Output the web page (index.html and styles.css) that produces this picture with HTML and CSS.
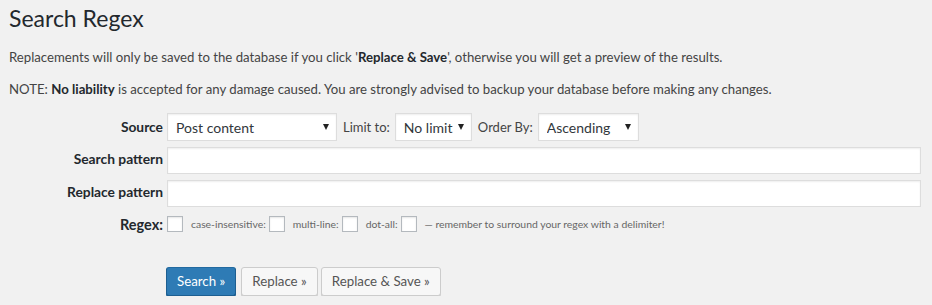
FILE: index.html
```html
<!DOCTYPE html>
<html>
<head>
<meta charset="utf-8">
<link rel="stylesheet" href="styles.css">
</head>
<body>
<div class="wrap">
  <h1 class="title">Search Regex</h1>
  <p class="note">Replacements will only be saved to the database if you click '<strong>Replace &amp; Save</strong>', otherwise you will get a preview of the results.</p>
  <p class="note">NOTE: <strong>No liability</strong> is accepted for any damage caused. You are strongly advised to backup your database before making any changes.</p>

  <form class="form-grid">
    <label class="lbl lbl-source">Source</label>
    <div class="field-row">
      <span class="sel sel-source"><select><option>Post content</option></select></span>
      <span class="inline-lbl">Limit to:</span>
      <span class="sel sel-limit"><select><option>No limit</option></select></span>
      <span class="inline-lbl">Order By:</span>
      <span class="sel sel-order"><select><option>Ascending</option></select></span>
    </div>

    <label class="lbl">Search pattern</label>
    <input class="text-in" type="text">

    <label class="lbl">Replace pattern</label>
    <input class="text-in" type="text">

    <label class="lbl lbl-regex">Regex:</label>
    <div class="regex-row">
      <input class="cb" type="checkbox">
      <span class="small">case-insensitive:</span><input class="cb" type="checkbox">
      <span class="small">multi-line:</span><input class="cb" type="checkbox">
      <span class="small">dot-all:</span><input class="cb" type="checkbox">
      <span class="small hint">— remember to surround your regex with a delimiter!</span>
    </div>
  </form>

  <div class="buttons">
    <button class="btn btn-primary" type="button">Search »</button>
    <button class="btn" type="button">Replace »</button>
    <button class="btn btn-last" type="button">Replace &amp; Save »</button>
  </div>
</div>
</body>
</html>
```

FILE: styles.css
```css
html, body {
  margin: 0;
  padding: 0;
  background: #f1f1f1;
}
body {
  font-family: Lato, "Open Sans", sans-serif;
  font-size: 13px;
  color: #444;
  line-height: 1.4;
}
.wrap {
  padding: 0 0 0 9px;
}
.title {
  font-size: 23px;
  font-weight: 400;
  color: #23282d;
  margin: 0;
  padding: 4px 0 0 0;
  line-height: 29px;
}
.note {
  margin: 15px 0 0 0;
  line-height: 19px;
  font-size: 13.2px;
}
.note + .note {
  margin-top: 13px;
}
.note strong {
  color: #23282d;
  font-weight: 700;
}
.form-grid {
  display: grid;
  grid-template-columns: 154px 754px;
  column-gap: 4px;
  margin-top: 14px;
  align-items: start;
}
.lbl {
  text-align: right;
  font-weight: 700;
  color: #23282d;
  font-size: 13.8px;
  line-height: 18px;
  padding-top: 3px;
}
.lbl-source { padding-top: 5px; }
.field-row {
  display: flex;
  align-items: center;
  height: 28px;
}
.inline-lbl {
  margin: 0 5px 0 6px;
  color: #444;
}
.sel {
  position: relative;
  display: inline-block;
}
.sel select {
  appearance: none;
  -webkit-appearance: none;
  height: 28px;
  border: 1px solid #ddd;
  box-shadow: inset 0 1px 2px rgba(0,0,0,.07);
  background: #fff;
  font-family: inherit;
  font-size: 14px;
  color: #32373c;
  padding: 0 8px;
  margin: 0;
  border-radius: 0;
  display: block;
}
.sel::after {
  content: "";
  position: absolute;
  right: 8px;
  top: 11px;
  border-left: 3px solid transparent;
  border-right: 3px solid transparent;
  border-top: 6px solid #222;
  pointer-events: none;
}
.sel-source select { width: 170px; }
.sel-limit select { width: 77px; }
.sel-order select { width: 101px; }

.text-in {
  box-sizing: border-box;
  width: 754px;
  height: 27px;
  border: 1px solid #ddd;
  box-shadow: inset 0 1px 2px rgba(0,0,0,.07);
  background: #fff;
  margin: 0;
  font-family: inherit;
  font-size: 14px;
}
.form-grid > .text-in, .form-grid > .lbl { margin-top: 6px; }
.form-grid > .lbl-source, .form-grid > .field-row { margin-top: 0; }

.lbl-regex { margin-top: 9px !important; padding-top: 0; font-size: 14.5px; }
.regex-row {
  display: flex;
  align-items: center;
  margin-top: 8px;
  height: 18px;
}
.cb {
  appearance: none;
  -webkit-appearance: none;
  width: 16px;
  height: 16px;
  margin: 0;
  border: 1px solid #b4b9be;
  background: #fff;
  box-shadow: inset 0 1px 2px rgba(0,0,0,.1);
  box-sizing: border-box;
}
.small {
  font-size: 10.4px;
  color: #666;
  margin: 0 3px 0 8px;
}
.hint { margin-left: 8px; }

.buttons {
  display: flex;
  gap: 5px;
  margin: 33px 0 0 157px;
}
.btn {
  height: 29px;
  box-sizing: border-box;
  padding: 0 10px 1px;
  font-family: inherit;
  font-size: 13.3px;
  line-height: 26px;
  border-radius: 3px;
  border: 1px solid #ccc;
  background: #f7f7f7;
  color: #555;
  box-shadow: 0 1px 0 #ccc;
  margin: 0;
}
.btn-last { margin-left: -2px; }
.btn-primary {
  background: #2e7bb5;
  border-color: #226aa0 #1d5f91 #1d5f91;
  color: #fff;
  box-shadow: 0 1px 0 #1d5f91;
}
```
